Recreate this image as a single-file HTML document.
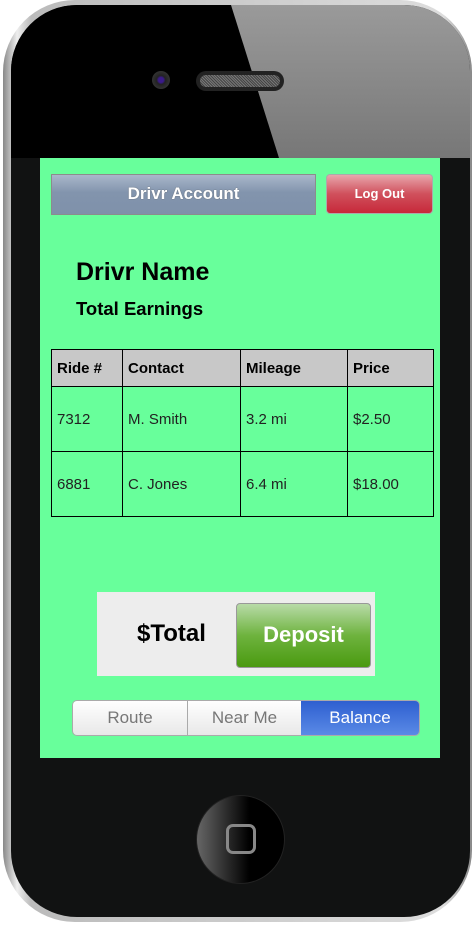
<!DOCTYPE html>
<html><head><style>
*{margin:0;padding:0;box-sizing:border-box}
body{width:475px;height:925px;background:#fff;position:relative;overflow:hidden;font-family:"Liberation Sans",Arial,sans-serif}
.body{position:absolute;left:3px;top:0;width:469px;height:922px;border-radius:72px;background:linear-gradient(90deg,#888,#eee 3%,#bbb 6%,#ddd 94%,#888);}
.inner{position:absolute;left:8px;top:5px;width:459px;height:912px;border-radius:66px;background:#111212;overflow:hidden}
.glare{position:absolute;left:0;top:0;width:459px;height:153px;background:linear-gradient(180deg,#9a9a9a,#777);clip-path:polygon(220px 0,459px 0,459px 153px,268px 153px)}
.top{position:absolute;left:0;top:0;width:459px;height:153px;background:#000;clip-path:polygon(0 0,220px 0,268px 153px,0 153px)}
.screen{position:absolute;left:40px;top:158px;width:400px;height:600px;background:#68ff9b}
.hdr{position:absolute;left:11px;top:16px;width:265px;height:41px;background:linear-gradient(#a9b7ca,#8294ad 45%,#7f91aa);border:1px solid #8c8c8c;color:#fff;font-weight:bold;font-size:17px;text-align:center;line-height:38px;text-shadow:0 0 1px #555}
.lo{position:absolute;left:286px;top:16px;width:107px;height:40px;border-radius:4px;background:linear-gradient(#e8a6ac,#d0505c 50%,#c7293a);border:1px solid #aaa;color:#fff;font-weight:bold;font-size:13px;text-align:center;line-height:38px}
.name{position:absolute;left:36px;top:100px;font-size:25px;font-weight:bold;color:#000}
.earn{position:absolute;left:36px;top:140px;font-size:18.5px;font-weight:bold;color:#000}
table{position:absolute;left:11px;top:191px;width:383px;border-collapse:collapse;font-size:15px}
td{border:1px solid #000;padding-left:5px;color:#222}
tr.h td{background:#c8c8c8;font-weight:bold;height:37px;color:#000}
tr.r td{height:65px}
.tot{position:absolute;left:57px;top:434px;width:278px;height:84px;background:#ededed}
.tot span{position:absolute;left:40px;top:28px;font-size:24px;font-weight:bold}
.dep{position:absolute;left:139px;top:11px;width:135px;height:65px;border-radius:4px;border:1px solid #999;background:linear-gradient(#b8dba8,#6eb33e 50%,#4a9a10);color:#fff;font-weight:bold;font-size:22px;text-align:center;line-height:62px}
.seg{position:absolute;left:32px;top:542px;width:348px;height:36px;border:1px solid #aaa;border-radius:5px;overflow:hidden;display:flex;font-size:17px}
.seg div{text-align:center;line-height:34px;color:#777;background:linear-gradient(#fff,#e8e8e8)}
.cam{position:absolute;left:152px;top:71px;width:18px;height:18px;border-radius:50%;background:radial-gradient(#3a1a8a 20%,#222 35%,#333 70%,#111)}
.spk{position:absolute;left:196px;top:71px;width:88px;height:20px;border-radius:10px;background:#222;}
.spk i{position:absolute;left:4px;top:4px;width:80px;height:12px;border-radius:6px;background:repeating-linear-gradient(45deg,#777 0 1px,#444 1px 2px)}
.home{position:absolute;left:196px;top:795px;width:89px;height:89px;border-radius:50%;background:linear-gradient(90deg,#666,#000 60%);border:1px solid #222}
.home i{position:absolute;left:29px;top:28px;width:30px;height:30px;border:3px solid #888;border-radius:7px}
</style></head><body>
<div class="body"><div class="inner"><div class="top"></div><div class="glare"></div></div></div>
<div class="cam"></div><div class="spk"><i></i></div>
<div class="home"><i></i></div>
<div class="screen">
<div class="hdr">Drivr Account</div>
<div class="lo">Log Out</div>
<div class="name">Drivr Name</div>
<div class="earn">Total Earnings</div>
<table>
<tr class="h"><td style="width:71px">Ride #</td><td style="width:118px">Contact</td><td style="width:107px">Mileage</td><td>Price</td></tr>
<tr class="r"><td>7312</td><td>M. Smith</td><td>3.2 mi</td><td>$2.50</td></tr>
<tr class="r"><td>6881</td><td>C. Jones</td><td>6.4 mi</td><td>$18.00</td></tr>
</table>
<div class="tot"><span>$Total</span><div class="dep">Deposit</div></div>
<div class="seg"><div style="width:115px;border-right:1px solid #aaa">Route</div><div style="width:113px">Near Me</div><div style="flex:1;color:#fff;background:linear-gradient(#2e5fd0,#5a8ae6)">Balance</div></div>
</div>
</body></html>
